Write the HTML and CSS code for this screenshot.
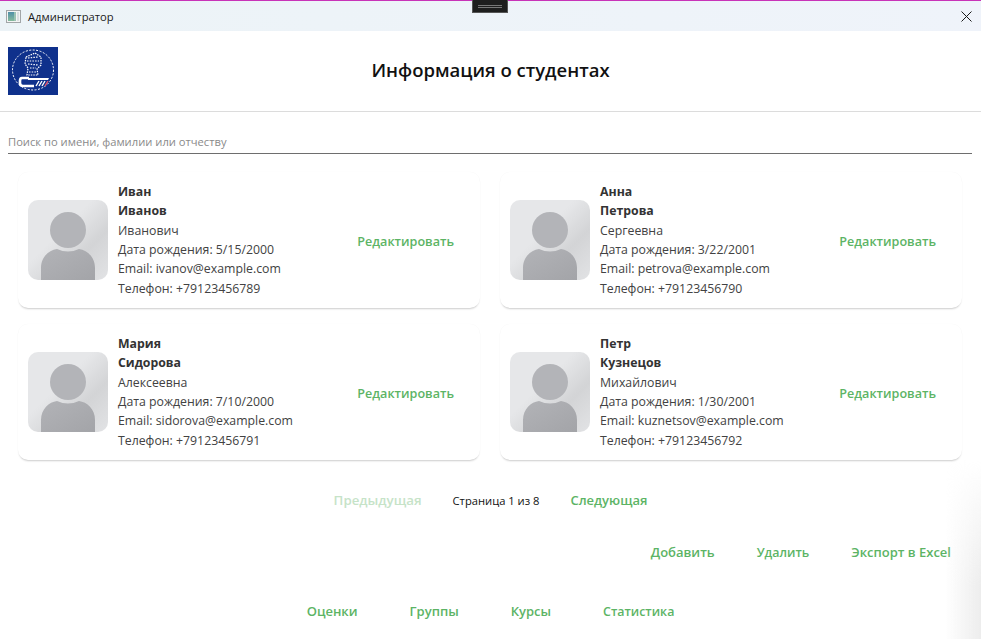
FILE: index.html
```html
<!DOCTYPE html>
<html>
<head>
<meta charset="utf-8">
<title>Администратор</title>
<link rel="stylesheet" href="styles.css">
</head>
<body>
<svg class="defs" width="0" height="0">
  <defs>
    <linearGradient id="bg" x1="0" y1="0" x2="1" y2="1">
      <stop offset="0.4" stop-color="#e6e7e9"/>
      <stop offset="0.68" stop-color="#d3d4d6"/>
      <stop offset="1" stop-color="#e2e3e5"/>
    </linearGradient>
    <linearGradient id="body" x1="0" y1="0" x2="1" y2="1">
      <stop offset="0" stop-color="#b2b3b7"/>
      <stop offset="1" stop-color="#a3a4a8"/>
    </linearGradient>
    <linearGradient id="pane" x1="0" y1="0" x2="0" y2="1">
      <stop offset="0" stop-color="#4f8fa8"/>
      <stop offset="1" stop-color="#86bb9c"/>
    </linearGradient>
  </defs>
</svg>

<div class="titlebar">
  <svg class="app-icon" width="15" height="13" viewBox="0 0 15 13">
    <rect x="0.5" y="0.5" width="14" height="12" fill="#f4f4f4" stroke="#a2a6a8"/>
    <rect x="2" y="2" width="6" height="9" fill="url(#pane)"/>
    <rect x="8" y="2" width="2" height="9" fill="#9cc3b4"/>
    <rect x="11" y="2" width="2" height="9" fill="#d9dee0"/>
  </svg>
  <span class="window-title">Администратор</span>
  <svg class="close-icon" width="11" height="11" viewBox="0 0 11 11">
    <path d="M0.5 0.5 L10.5 10.5 M10.5 0.5 L0.5 10.5" stroke="#1a1a1a" stroke-width="1" fill="none"/>
  </svg>
</div>
<div class="debug-handle"><span></span></div>

<div class="header">
  <svg class="logo" width="50" height="48" viewBox="0 0 50 48">
    <rect width="50" height="48" fill="#0f318c"/>
    <ellipse cx="25" cy="23" rx="20.5" ry="20" fill="none" stroke="#fff" stroke-width="1" stroke-dasharray="2 1.5"/>
    <path d="M18 10 L27 6 L33 10 L33 18 L29 22 L30 28 L19 28 L20 21 L17 17 Z" fill="none" stroke="#fff" stroke-width="1.2" stroke-dasharray="1.5 1"/>
    <path d="M20 11 L30 10 M19 14 L31 14 M20 17 L30 18 M22 21 L28 21 M21 25 L29 25" stroke="#fff" stroke-width="1.2" stroke-dasharray="1.5 1.2"/>
    <path d="M21 31 H14 Q12 31 12 34 V36 Q12 39 15 39 H26" fill="none" stroke="#fff" stroke-width="2.6"/>
    <path d="M20 31 H41 L40 33 H20 Z" fill="#fff"/>
    <path d="M28 39 L31 34 M31 39 L34 34 M34 39 L37 34" stroke="#fff" stroke-width="1.4"/>
    <path d="M37 39 L40 34" stroke="#e8506a" stroke-width="1.4"/>
  </svg>
  <h1 class="page-title">Информация о студентах</h1>
</div>

<div class="search">
  <input class="search-input" type="text" placeholder="Поиск по имени, фамилии или отчеству">
</div>

<div class="cards">
  <div class="card">
    <svg class="avatar" width="80" height="80" viewBox="0 0 80 80">
      <rect width="80" height="80" fill="url(#bg)"/>
      <circle cx="40" cy="30" r="18" fill="#b3b4b8"/>
      <path d="M13 80 V68 C13 57 21 50 29 49 Q40 54 51 49 C59 50 67 57 67 68 V80 Z" fill="url(#body)"/>
    </svg>
    <div class="info">
      <div class="name">Иван</div>
      <div class="name">Иванов</div>
      <div>Иванович</div>
      <div>Дата рождения: 5/15/2000</div>
      <div>Email: ivanov@example.com</div>
      <div>Телефон: +79123456789</div>
    </div>
    <a class="link edit">Редактировать</a>
  </div>
  <div class="card">
    <svg class="avatar" width="80" height="80" viewBox="0 0 80 80">
      <rect width="80" height="80" fill="url(#bg)"/>
      <circle cx="40" cy="30" r="18" fill="#b3b4b8"/>
      <path d="M13 80 V68 C13 57 21 50 29 49 Q40 54 51 49 C59 50 67 57 67 68 V80 Z" fill="url(#body)"/>
    </svg>
    <div class="info">
      <div class="name">Анна</div>
      <div class="name">Петрова</div>
      <div>Сергеевна</div>
      <div>Дата рождения: 3/22/2001</div>
      <div>Email: petrova@example.com</div>
      <div>Телефон: +79123456790</div>
    </div>
    <a class="link edit">Редактировать</a>
  </div>
  <div class="card">
    <svg class="avatar" width="80" height="80" viewBox="0 0 80 80">
      <rect width="80" height="80" fill="url(#bg)"/>
      <circle cx="40" cy="30" r="18" fill="#b3b4b8"/>
      <path d="M13 80 V68 C13 57 21 50 29 49 Q40 54 51 49 C59 50 67 57 67 68 V80 Z" fill="url(#body)"/>
    </svg>
    <div class="info">
      <div class="name">Мария</div>
      <div class="name">Сидорова</div>
      <div>Алексеевна</div>
      <div>Дата рождения: 7/10/2000</div>
      <div>Email: sidorova@example.com</div>
      <div>Телефон: +79123456791</div>
    </div>
    <a class="link edit">Редактировать</a>
  </div>
  <div class="card">
    <svg class="avatar" width="80" height="80" viewBox="0 0 80 80">
      <rect width="80" height="80" fill="url(#bg)"/>
      <circle cx="40" cy="30" r="18" fill="#b3b4b8"/>
      <path d="M13 80 V68 C13 57 21 50 29 49 Q40 54 51 49 C59 50 67 57 67 68 V80 Z" fill="url(#body)"/>
    </svg>
    <div class="info">
      <div class="name">Петр</div>
      <div class="name">Кузнецов</div>
      <div>Михайлович</div>
      <div>Дата рождения: 1/30/2001</div>
      <div>Email: kuznetsov@example.com</div>
      <div>Телефон: +79123456792</div>
    </div>
    <a class="link edit">Редактировать</a>
  </div>
</div>

<div class="pagination">
  <a class="link disabled">Предыдущая</a>
  <span class="page-num">Страница 1 из 8</span>
  <a class="link">Следующая</a>
</div>

<div class="actions">
  <a class="link">Добавить</a>
  <a class="link narrow">Удалить</a>
  <a class="link">Экспорт в Excel</a>
</div>

<div class="nav">
  <a class="link">Оценки</a>
  <a class="link">Группы</a>
  <a class="link">Курсы</a>
  <a class="link narrow">Статистика</a>
</div>

<div class="edge-shade"></div>
</body>
</html>
```

FILE: styles.css
```css
html, body {
  height: 100%;
}

body {
  margin: 0;
  overflow: hidden;
  background-color: #fff;
  font-family: "Open Sans", "Noto Sans", sans-serif;
  font-size: 12.3px;
  color: #424242;
}

.defs {
  display: block;
}

.titlebar {
  height: 30px;
  border-top: 1px solid #c832b8;
  background: linear-gradient(90deg, #ecf3f7, #eff3fa);
  display: flex;
  align-items: center;
  padding: 0 9px 0 6px;
}

.app-icon {
  margin-right: 7px;
}

.window-title {
  flex: 1;
  font-size: 11.2px;
  color: #1a1a1a;
}

.debug-handle {
  position: absolute;
  left: 472px;
  top: 0;
  width: 36px;
  height: 13px;
  box-sizing: border-box;
  border: 1px solid #555;
  border-top: none;
  background-color: #1e1e1e;
}

.debug-handle span {
  display: block;
  width: 24px;
  height: 1px;
  margin: 5px auto 0;
  border-top: 1px solid #777;
  border-bottom: 1px solid #777;
}

.header {
  height: 81px;
  box-sizing: border-box;
  border-bottom: 1px solid #dcdcdc;
  padding: 16px 8px 0;
  display: flex;
  align-items: flex-start;
}

.logo {
  flex: none;
}

.page-title {
  flex: 1;
  margin: 10px 50px 0 0;
  text-align: center;
  font-size: 18.5px;
  font-weight: 600;
  line-height: 26px;
  color: #111;
}

.search {
  padding: 22px 9px 0 8px;
}

.search-input {
  display: block;
  width: 100%;
  height: 20px;
  box-sizing: border-box;
  padding: 0 0 4px;
  border: none;
  border-bottom: 1px solid #6e6e6e;
  outline: none;
  font-family: inherit;
  font-size: 11.2px;
}

.search-input::placeholder {
  color: #8a8a8a;
}

.cards {
  display: grid;
  grid-template-columns: 462px 462px;
  column-gap: 20px;
  row-gap: 16px;
  padding: 18px 0 0 18px;
}

.card {
  height: 136px;
  box-sizing: border-box;
  padding: 10px 26px 10px 10px;
  border-radius: 10px;
  background-color: #fff;
  box-shadow: 0 2px 2px -1px rgba(0, 0, 0, 0.2), 0 0 1px rgba(0, 0, 0, 0.05);
  display: flex;
  align-items: center;
}

.avatar {
  flex: none;
  margin-right: 10px;
  border-radius: 10px;
}

.info {
  flex: 1;
  line-height: 19.4px;
}

.name {
  font-weight: 700;
  color: #333;
}

.link {
  font-size: 13px;
  font-weight: 600;
  color: #5cb465;
}

.edit {
  font-size: 12.6px;
  margin-top: 2px;
}

.narrow {
  font-size: 12.4px;
}

.disabled {
  color: #c6e3c8;
  font-size: 13.3px;
}

.pagination {
  display: flex;
  justify-content: center;
  align-items: center;
  gap: 31px;
  margin-top: 30px;
  height: 20px;
}

.page-num {
  color: #111;
  font-size: 11.2px;
}

.actions {
  display: flex;
  justify-content: flex-end;
  gap: 42px;
  padding-right: 30px;
  margin-top: 32px;
  height: 20px;
  align-items: center;
}

.nav {
  display: flex;
  justify-content: center;
  gap: 52px;
  margin-top: 39px;
  height: 20px;
  align-items: center;
}

.edge-shade {
  position: absolute;
  right: 0;
  top: 460px;
  bottom: 0;
  width: 36px;
  background: linear-gradient(90deg, rgba(236, 236, 236, 0), rgba(236, 236, 236, 0.95));
  -webkit-mask-image: linear-gradient(180deg, transparent, #000 70%);
  mask-image: linear-gradient(180deg, transparent, #000 70%);
}
```
